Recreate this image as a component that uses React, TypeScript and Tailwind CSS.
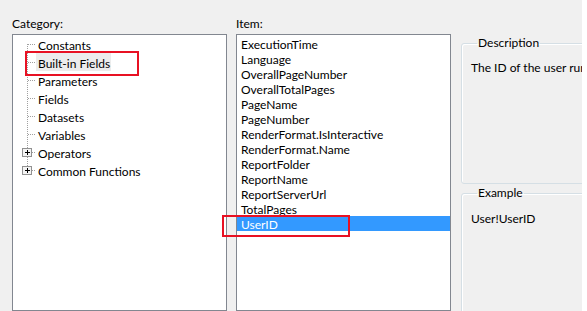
import React from "react";

const FONT = { fontFamily: "Lato, 'Noto Sans', sans-serif" };

const CATEGORIES = [
  { label: "Constants", expandable: false },
  { label: "Built-in Fields", expandable: false, selected: true },
  { label: "Parameters", expandable: false },
  { label: "Fields", expandable: false },
  { label: "Datasets", expandable: false },
  { label: "Variables", expandable: false },
  { label: "Operators", expandable: true },
  { label: "Common Functions", expandable: true },
];

const ITEMS = [
  "ExecutionTime",
  "Language",
  "OverallPageNumber",
  "OverallTotalPages",
  "PageName",
  "PageNumber",
  "RenderFormat.IsInteractive",
  "RenderFormat.Name",
  "ReportFolder",
  "ReportName",
  "ReportServerUrl",
  "TotalPages",
  "UserID",
];

function TreeConnector({
  first,
  last,
  expandable,
}: {
  first: boolean;
  last: boolean;
  expandable: boolean;
}) {
  return (
    <svg width="25" height="18" className="shrink-0" shapeRendering="crispEdges">
      {/* vertical dotted line */}
      <line
        x1="14.5"
        y1={first ? 9 : 0}
        x2="14.5"
        y2={last ? 9 : 18}
        stroke="#a0a0a0"
        strokeDasharray="1 1"
      />
      {/* horizontal dotted line */}
      <line x1="15" y1="9.5" x2="23" y2="9.5" stroke="#a0a0a0" strokeDasharray="1 1" />
      {expandable && (
        <g>
          <rect x="9.5" y="5.5" width="9" height="8" fill="#f4f4f4" stroke="#919191" />
          <line x1="12" y1="9.5" x2="17" y2="9.5" stroke="#000" />
          <line x1="14.5" y1="7" x2="14.5" y2="12" stroke="#000" />
        </g>
      )}
    </svg>
  );
}

export default function App() {
  return (
    <div
      className="relative w-[587px] h-[311px] overflow-hidden bg-[#f0f0f0] flex text-[12px] leading-[16px] text-black"
      style={FONT}
    >
      {/* Category column */}
      <div className="ml-[12px] w-[215px] shrink-0 flex flex-col">
        <div className="h-[35px] pt-[16px]">Category:</div>
        <div className="h-[290px] border border-[#828790] bg-white">
          {CATEGORIES.map((c, i) => (
            <div key={c.label} className="h-[18px] flex items-center">
              <TreeConnector
                first={i === 0}
                last={i === CATEGORIES.length - 1}
                expandable={c.expandable}
              />
              <span
                className={
                  c.selected
                    ? "h-[18px] leading-[21px] pl-[2px] pr-[1px] bg-[#ececec] -ml-[2px] whitespace-nowrap"
                    : "h-[18px] leading-[21px] whitespace-nowrap"
                }
              >
                {c.label}
              </span>
            </div>
          ))}
        </div>
      </div>

      {/* Item column */}
      <div className="ml-[9px] w-[215px] shrink-0 flex flex-col">
        <div className="h-[35px] pt-[16px]">Item:</div>
        <div className="h-[290px] border border-[#828790] bg-white pt-[1px]">
          {ITEMS.map((item) => (
            <div
              key={item}
              className={
                item === "UserID"
                  ? "h-[15px] leading-[18px] pl-[4px] bg-[#3399ff] text-white whitespace-nowrap"
                  : "h-[15px] leading-[18px] pl-[4px] whitespace-nowrap"
              }
            >
              {item}
            </div>
          ))}
        </div>
      </div>

      {/* Description / Example column */}
      <div className="ml-[10px] w-[121px] shrink-0 overflow-hidden pt-[35px] flex flex-col gap-[1px]">
        <fieldset className="w-[160px] h-[149px] shrink-0 border border-[#d5dfe5] rounded-[3px] shadow-[inset_1px_1px_0_#fff] pl-[9px] pt-[9px]">
          <legend className="ml-[6px] px-[1px] leading-[16px]">Description</legend>
          <div className="whitespace-nowrap">The ID of the user running the report.</div>
        </fieldset>
        <fieldset className="w-[160px] h-[140px] shrink-0 border border-[#d5dfe5] rounded-[3px] shadow-[inset_1px_1px_0_#fff] pl-[9px] pt-[10px]">
          <legend className="ml-[6px] px-[1px] leading-[16px]">Example</legend>
          <div className="whitespace-nowrap">User!UserID</div>
        </fieldset>
      </div>

      <div className="flex-1 bg-white" />

      {/* red annotation boxes */}
      <div className="absolute left-[25px] top-[51px] w-[114px] h-[25px] border-2 border-[#e81123]" />
      <div className="absolute left-[222px] top-[215px] w-[128px] h-[22px] border-2 border-[#e81123]" />
    </div>
  );
}
